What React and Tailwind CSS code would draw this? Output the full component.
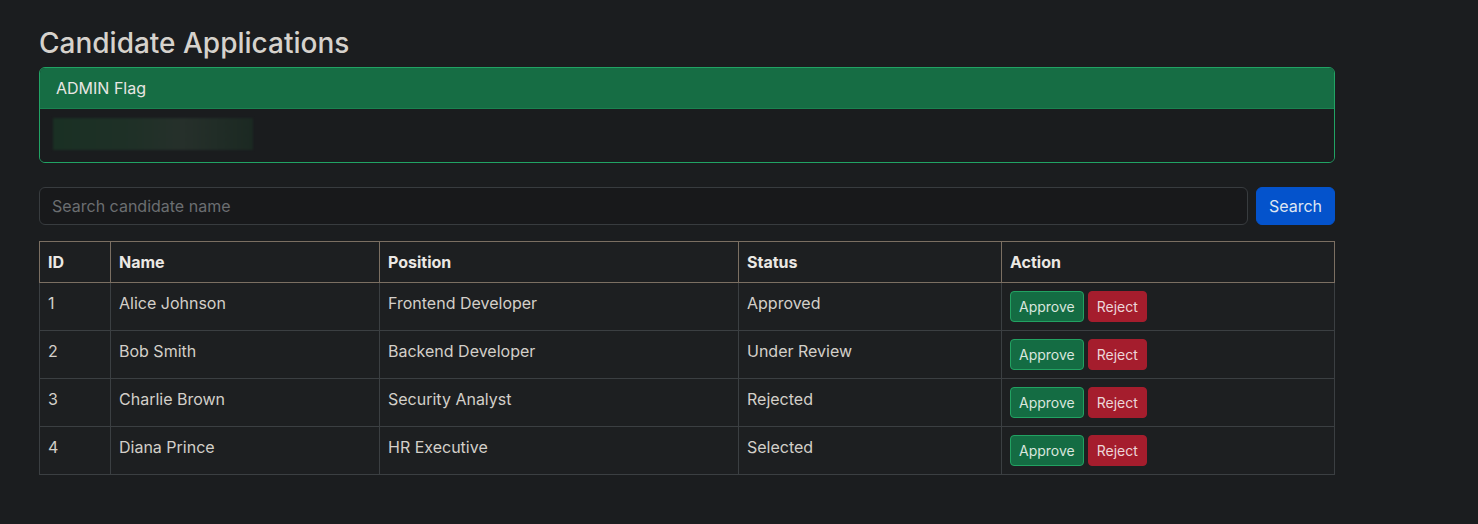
import React from "react";

const rows = [
  { id: 1, name: "Alice Johnson", position: "Frontend Developer", status: "Approved" },
  { id: 2, name: "Bob Smith", position: "Backend Developer", status: "Under Review" },
  { id: 3, name: "Charlie Brown", position: "Security Analyst", status: "Rejected" },
  { id: 4, name: "Diana Prince", position: "HR Executive", status: "Selected" },
];

export default function App() {
  return (
    <div
      className="min-h-[524px] w-full bg-[#1b1d1f] text-[#d3cfc9] text-base leading-6"
      style={{ fontFamily: "Inter, 'Noto Sans', 'Liberation Sans', sans-serif" }}
    >
      <div className="pl-[39px] pt-[26px] w-[1335px]">
        <h3 className="text-[28px] leading-[34px] font-medium text-[#d6d2cc] mb-[7px]">
          Candidate Applications
        </h3>

        <div className="border border-[#21a364] rounded-md overflow-hidden mb-6">
          <div className="bg-[#166d44] text-[#e8e6e3] px-4 py-2 border-b border-[#21a364]/40">
            ADMIN Flag
          </div>
          <div className="bg-[#1a1c1e] pl-[13px] pt-[9px] pb-[12px]">
            <div className="w-[200px] h-[32px] bg-[linear-gradient(90deg,#1a3024_0%,#1f3027_40%,#26302b_65%,#1b2922_100%)] blur-[1px]" />
          </div>
        </div>

        <div className="flex gap-2 mb-4">
          <input
            className="flex-1 h-[38px] rounded-md border border-[#383c3f] bg-[#18191b] px-3 text-[#d3cfc9] placeholder:text-[#6b6e71] outline-none"
            placeholder="Search candidate name"
          />
          <button className="h-[38px] w-[79px] rounded-md bg-[#0453cc] text-[#dfe6f2] border border-[#0453cc]">
            Search
          </button>
        </div>

        <table className="w-full border-collapse bg-[#1d1f21]">
          <thead>
            <tr className="text-[#ebe8e4] font-bold">
              <th className="w-[71px] text-left px-2 py-2 border border-[#7b6f62]">ID</th>
              <th className="w-[269px] text-left px-2 py-2 border border-[#7b6f62]">Name</th>
              <th className="w-[359px] text-left px-2 py-2 border border-[#7b6f62]">Position</th>
              <th className="w-[263px] text-left px-2 py-2 border border-[#7b6f62]">Status</th>
              <th className="text-left px-2 py-2 border border-[#7b6f62]">Action</th>
            </tr>
          </thead>
          <tbody>
            {rows.map((r) => (
              <tr key={r.id}>
                <td className="align-top px-2 py-2 border border-[#3b3f42]">{r.id}</td>
                <td className="align-top px-2 py-2 border border-[#3b3f42]">{r.name}</td>
                <td className="align-top px-2 py-2 border border-[#3b3f42]">{r.position}</td>
                <td className="align-top px-2 py-2 border border-[#3b3f42]">{r.status}</td>
                <td className="align-top px-2 py-2 border border-[#3b3f42]">
                  <div className="flex gap-1">
                    <button className="h-[31px] px-2 text-sm rounded-[4px] bg-[#146c43] border border-[#22a262] text-[#d9e6de]">
                      Approve
                    </button>
                    <button className="h-[31px] px-2 text-sm rounded-[4px] bg-[#a51d2d] border border-[#a51d2d] text-[#ecd6d8]">
                      Reject
                    </button>
                  </div>
                </td>
              </tr>
            ))}
          </tbody>
        </table>
      </div>
    </div>
  );
}
